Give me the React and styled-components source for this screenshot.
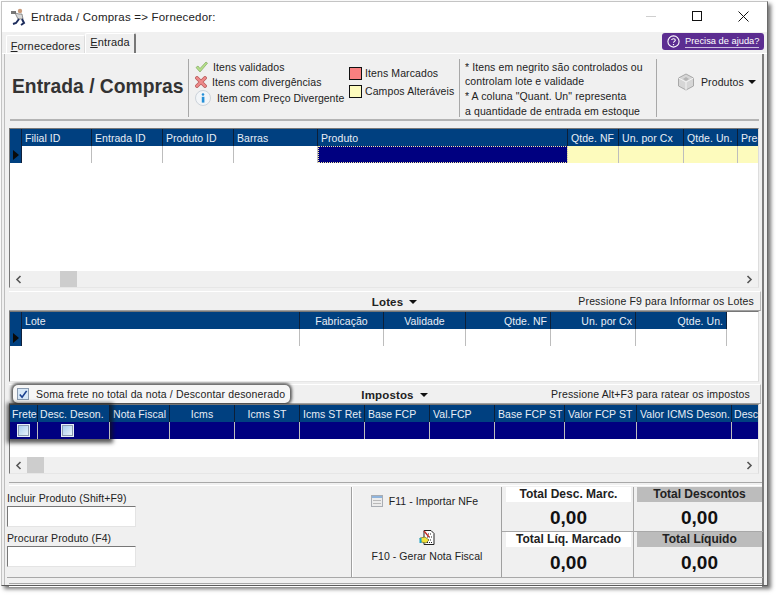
import React from 'react';
import styled, { createGlobalStyle } from 'styled-components';

const GlobalStyle = createGlobalStyle`
  html, body { margin: 0; padding: 0; background: #fff; }
  body { font-family: "Liberation Sans", Arial, sans-serif; font-size: 11px; color: #111; }
`;

const navy = '#004080';
const selected = '#000080';

const grid1Cols = [
  { label: 'Filial ID', w: 70 },
  { label: 'Entrada ID', w: 71 },
  { label: 'Produto ID', w: 71 },
  { label: 'Barras', w: 84 },
  { label: 'Produto', w: 250, focus: true },
  { label: 'Qtde. NF', w: 51, tint: true },
  { label: 'Un. por Cx', w: 65, tint: true },
  { label: 'Qtde. Un.', w: 54, tint: true },
  { label: 'Preço', w: 20, tint: true, last: true },
];

const grid2Cols = [
  { label: 'Lote', w: 278 },
  { label: 'Fabricação', w: 84, align: 'center' },
  { label: 'Validade', w: 82, align: 'center' },
  { label: 'Qtde. NF', w: 85, align: 'right' },
  { label: 'Un. por Cx', w: 85, align: 'right' },
  { label: 'Qtde. Un.', w: 91, align: 'right' },
];

const grid3Cols = [
  { label: 'Frete', w: 28, check: true, tight: true },
  { label: 'Desc. Deson.', w: 72, check: true, tight: true, offset: 13 },
  { label: 'Nota Fiscal', w: 60 },
  { label: 'Icms', w: 65, align: 'center' },
  { label: 'Icms ST', w: 65, align: 'center' },
  { label: 'Icms ST Ret', w: 65, align: 'center' },
  { label: 'Base FCP', w: 65 },
  { label: 'Val.FCP', w: 65 },
  { label: 'Base FCP ST', w: 70 },
  { label: 'Valor FCP ST', w: 72 },
  { label: 'Valor ICMS Deson.', w: 95 },
  { label: 'Desc.', w: 26, tight: true, last: true },
];

const Page = styled.div`
  width: 776px;
  height: 595px;
  padding: 1px 0 0 1px;
  box-sizing: border-box;
  overflow: hidden;
`;

const Win = styled.div`
  width: 767px;
  height: 585px;
  box-sizing: border-box;
  border: 1px solid #c4c4c4;
  border-right-color: #6a6a6a;
  border-bottom-color: #5a5a5a;
  box-shadow: 3px 3px 4px rgba(0, 0, 0, 0.55);
  background: #f0f0f0;
  display: flex;
  flex-direction: column;
`;

const TitleBar = styled.div`
  height: 30px;
  flex: none;
  background: #fff;
  display: flex;
  align-items: center;
  padding-left: 9px;
`;

const Title = styled.span`
  margin-left: 3px;
  font-size: 11.5px;
  letter-spacing: 0.2px;
  color: #222;
`;

const WinButtons = styled.div`
  margin-left: auto;
  display: flex;
  align-items: center;
  height: 100%;
  padding: 0 1px 2px 0;
  box-sizing: border-box;
`;

const WinButton = styled.div`
  width: 46px;
  height: 100%;
  display: flex;
  align-items: center;
  justify-content: center;
`;

const TabStrip = styled.div`
  height: 22px;
  flex: none;
  display: flex;
  align-items: flex-end;
  padding: 0 3px 0 4px;
  border-bottom: 1px solid #fff;
  box-sizing: border-box;
`;

const Tab = styled.div`
  height: ${(p) => (p.$active ? 20 : 18)}px;
  width: ${(p) => p.$w}px;
  box-sizing: border-box;
  display: flex;
  align-items: center;
  justify-content: center;
  font-size: 11px;
  letter-spacing: 0.15px;
  color: #222;
  border: 1px solid #fff;
  border-bottom: none;
  border-right: ${(p) => (p.$active ? '2px solid #777' : '1px solid #ddd')};
  border-radius: 2px 2px 0 0;
  padding: ${(p) => (p.$active ? '0 0 3px' : '2px 0 0')};
`;

const HelpButton = styled.div`
  margin-left: auto;
  width: 102px;
  height: 17px;
  margin-bottom: 3px;
  padding-left: 5px;
  box-sizing: border-box;
  background: #5c2d91;
  border-radius: 3px;
  display: flex;
  align-items: center;
  gap: 5px;
  color: #fff;
  font-size: 9.3px;
  & span { border-bottom: 1px solid #cdbfe0; line-height: 11px; }
`;

const Content = styled.div`
  flex: 1;
  min-height: 0;
  display: flex;
  flex-direction: column;
  margin-right: 3px;
  border-right: 2px solid #7c7c7c;
  border-left: 1px solid #bdbdbd;
  margin-left: 2px;
  padding: 0 0 0 4px;
`;

const Header = styled.div`
  height: 67px;
  flex: none;
  display: flex;
  align-items: stretch;
  padding-top: 5px;
  box-sizing: border-box;
  border-bottom: 2px solid #b4b4b4;
  margin: 0 3px 0 1px;
`;

const BigTitle = styled.div`
  width: 179px;
  margin-left: -1px;
  padding-left: 3px;
  box-sizing: border-box;
  display: flex;
  align-items: center;
  height: 56px;
  font-size: 19.3px;
  font-weight: 700;
  color: #333;
  white-space: nowrap;
`;

const HeaderBlock = styled.div`
  width: ${(p) => p.$w}px;
  flex: none;
  box-sizing: border-box;
  border-left: ${(p) => (p.$divider ? '1px solid #a8a8a8' : 'none')};
  height: 58px;
  display: flex;
  flex-direction: column;
  padding-top: ${(p) => p.$top || 0}px;
  padding-left: ${(p) => p.$pad || 0}px;
`;

const LegendRow = styled.div`
  display: flex;
  align-items: center;
  height: ${(p) => p.$h || 15}px;
  gap: ${(p) => p.$gap || 3}px;
  white-space: nowrap;
  font-size: 10.5px;
  letter-spacing: ${(p) => (p.$flat ? 0 : 0.1)}px;
  color: #222;
  & svg { flex: none; }
`;

const Swatch = styled.div`
  width: 11px;
  height: 11px;
  border: 1px solid #111;
  background: ${(p) => p.$color};
  flex: none;
`;

const NoteLine = styled.div`
  height: ${(p) => p.$h || 14}px;
  line-height: ${(p) => p.$h || 14}px;
  font-size: 10.5px;
  letter-spacing: 0.1px;
  white-space: nowrap;
  color: #222;
`;

const ProdutosMenu = styled.div`
  display: flex;
  align-items: center;
  gap: 6px;
  height: 100%;
  padding: 0 0 12px 20px;
  box-sizing: border-box;
  font-size: 10.5px;
  letter-spacing: 0.1px;
  color: #222;
`;

const Caret = styled.span`
  display: inline-block;
  width: 0;
  height: 0;
  border-left: 4px solid transparent;
  border-right: 4px solid transparent;
  border-top: 4px solid #111;
  margin-left: ${(p) => p.$gap || 0}px;
`;

const GridBox = styled.div`
  position: relative;
  height: ${(p) => p.$h}px;
  flex: none;
  box-sizing: border-box;
  background: #fff;
  margin: ${(p) => p.$mt || 0}px 2px 0 0;
  width: 750px;
  border-top: 1px solid #777;
  border-left: 1px solid #777;
  border-right: 1px solid #ddd;
  border-bottom: 1px solid #e6e6e6;
  display: flex;
  flex-direction: column;
`;

const HeadRow = styled.div`
  display: flex;
  height: 17px;
  flex: none;
  overflow: hidden;
`;

const BodyRow = styled.div`
  display: flex;
  height: 17px;
  flex: none;
  overflow: hidden;
`;

const Indicator = styled.div`
  width: 12px;
  flex: none;
  background: ${navy};
  border-right: 1px solid #10203a;
  box-sizing: border-box;
  display: flex;
  align-items: center;
  padding-left: 3px;
`;

const Arrow = styled.span`
  width: 0;
  height: 0;
  border-top: 5px solid transparent;
  border-bottom: 5px solid transparent;
  border-left: 6px solid #0a0a0a;
`;

const HeadCell = styled.div`
  width: ${(p) => p.$w}px;
  flex: none;
  box-sizing: border-box;
  background: ${navy};
  color: #e8eef6;
  font-size: 10.5px;
  line-height: 18px;
  letter-spacing: 0.05px;
  white-space: nowrap;
  overflow: hidden;
  text-align: ${(p) => p.$align || 'left'};
  padding: 0 3px 0 ${(p) => (p.$tight ? 2 : 3)}px;
  border-right: ${(p) => (p.$last ? 'none' : '1px solid #0c1f38')};
`;

const BodyCell = styled.div`
  width: ${(p) => p.$w}px;
  flex: none;
  box-sizing: border-box;
  background: ${(p) => p.$bg || '#fff'};
  border-right: ${(p) => (p.$last ? 'none' : '1px solid #bdbdbd')};
  ${(p) => p.$focus && 'outline: 1px dotted #f4e9a0; outline-offset: -1px;'}
  display: flex;
  align-items: center;
  justify-content: center;
  padding-right: ${(p) => p.$offset || 0}px;
`;

const Spacer = styled.div`
  flex: 1;
`;

const ScrollBar = styled.div`
  height: 16px;
  flex: none;
  background: #f0f0f0;
  display: flex;
  align-items: center;
  justify-content: space-between;
  padding: 0 5px 0 5px;
  position: relative;
`;

const ScrollThumb = styled.div`
  position: absolute;
  top: 0;
  left: ${(p) => p.$left}px;
  width: 17px;
  height: 16px;
  background: #cdcdcd;
`;

const SectionBar = styled.div`
  height: 20px;
  flex: none;
  width: 752px;
  margin-top: ${(p) => p.$mt || 0}px;
  box-sizing: border-box;
  background: #f0f0f0;
  border-top: 1px solid #fff;
  border-bottom: 1px solid #a0a0a0;
  border-right: 1px solid #bbb;
  display: grid;
  grid-template-columns: 1fr auto 1fr;
  align-items: center;
  font-size: 10.5px;
  letter-spacing: 0.15px;
  color: #222;
`;

const SectionTitle = styled.div`
  display: flex;
  align-items: center;
  gap: 6px;
  font-weight: 700;
  font-size: 11.5px;
  padding: 2px 0 0 20px;
`;

const SectionHint = styled.div`
  justify-self: end;
  padding: 0 ${(p) => p.$right || 6}px 1px 0;
`;

const Callout = styled.div`
  justify-self: start;
  display: flex;
  align-items: center;
  gap: 7px;
  width: 277px;
  height: 18px;
  box-sizing: border-box;
  margin-left: 4px;
  padding-left: 4px;
  background: #f6f6f6;
  border-radius: 5px;
  box-shadow: 0 0 3px 2px rgba(40, 40, 40, 0.75);
  white-space: nowrap;
`;

const CheckBox = styled.div`
  width: ${(p) => (p.$light ? 11 : 12)}px;
  height: ${(p) => (p.$light ? 11 : 12)}px;
  flex: none;
  box-sizing: border-box;
  border: 1px solid #8a9bb0;
  background: ${(p) => (p.$light ? 'linear-gradient(135deg, #a8cdee, #e8f2fb)' : '#d8e8f8')};
  outline: ${(p) => (p.$light ? '1px solid #e6eef7' : 'none')};
  display: flex;
  align-items: center;
  justify-content: center;
`;

const FreteHighlight = styled.div`
  position: absolute;
  left: 0;
  top: 0;
  width: 100px;
  height: 34px;
  box-shadow: 0 1px 4px 3px rgba(20, 20, 20, 0.7);
  pointer-events: none;
`;

const DoubleRule = styled.div`
  height: 2px;
  flex: none;
  margin: ${(p) => p.$mt || 0}px 0 0 0;
  border-top: 1px solid #a8a8a8;
  border-bottom: 1px solid #fff;
`;

const Footer = styled.div`
  flex: none;
  height: 90px;
  display: flex;
  margin-top: 1px;
  border-bottom: 1px solid #a8a8a8;
  margin-right: -1px;
  margin-left: -2px;
`;

const SearchPane = styled.div`
  width: 345px;
  flex: none;
  box-sizing: border-box;
  padding: 4px 0 0 0;
  border-right: 1px solid #a0a0a0;
`;

const FieldLabel = styled.div`
  height: 14px;
  line-height: 14px;
  font-size: 10.5px;
  letter-spacing: 0.1px;
  color: #222;
`;

const TextBox = styled.div`
  width: 129px;
  height: 21px;
  box-sizing: border-box;
  margin: 1px 0 4px 0;
  background: #fff;
  border-top: 1px solid #777;
  border-left: 1px solid #777;
  border-right: 1px solid #e4e4e4;
  border-bottom: 1px solid #e4e4e4;
`;

const ActionPane = styled.div`
  width: 150px;
  flex: none;
  box-sizing: border-box;
  border-left: 1px solid #fff;
  border-right: 1px solid #a0a0a0;
  display: flex;
  flex-direction: column;
  align-items: center;
  font-size: 10.5px;
  letter-spacing: 0.05px;
  color: #222;
  padding-top: 6px;
`;

const ActionRow = styled.div`
  display: flex;
  align-items: center;
  gap: 6px;
  height: 16px;
  padding-right: 5px;
`;

const GenerateIcon = styled.div`
  margin-top: 20px;
  height: 17px;
`;

const GenerateLabel = styled.div`
  margin-top: 4px;
`;

const Totals = styled.div`
  flex: 1;
  display: grid;
  grid-template-columns: 132px 1fr;
  grid-template-rows: 45px 1fr;
`;

const TotalCell = styled.div`
  box-sizing: border-box;
  padding: 0 ${(p) => (p.$right ? 1 : 2)}px 0 ${(p) => (p.$right ? 3 : 4)}px;
  border-right: ${(p) => (p.$right ? 'none' : '1px solid #a8a8a8')};
  border-bottom: ${(p) => (p.$bottom ? 'none' : '1px solid #a8a8a8')};
  display: flex;
  flex-direction: column;
  align-items: stretch;
`;

const TotalLabel = styled.div`
  height: 15px;
  line-height: 15px;
  flex: none;
  text-align: center;
  font-size: 12px;
  font-weight: 700;
  color: #222;
  background: ${(p) => (p.$gray ? '#bcbcbc' : '#fff')};
`;

const TotalValue = styled.div`
  text-align: center;
  font-size: 19px;
  font-weight: 700;
  color: #111;
  line-height: 26px;
  margin-top: 3px;
`;

const Check = ({ color = '#1a3f8f' }) => (
  <svg width="11" height="11" viewBox="0 0 11 11">
    <path d="M2 5.5 L4.5 8.5 L9.5 1.5" fill="none" stroke={color} strokeWidth="1.8" />
  </svg>
);

const PersonIcon = () => (
  <svg width="17" height="18" viewBox="0 0 17 18">
    <rect x="0" y="3" width="5" height="3" fill="#777" />
    <circle cx="9" cy="3" r="2.2" fill="#c99a7a" />
    <path d="M4 5 L8 6 L11 6 L12 11 L7 11 Z" fill="#d8d8d8" stroke="#555" strokeWidth="0.6" />
    <path d="M8 11 L5 15 L2 16 M11 11 L13 15 L10 17" fill="none" stroke="#1c2c5c" strokeWidth="2" />
  </svg>
);

const ValidIcon = () => (
  <svg width="13" height="12" viewBox="0 0 13 12">
    <path d="M1 6.5 L3 5 L5 7.5 L11 1 L12.5 2.2 L5 11 Z" fill="#b6e08a" stroke="#7fa860" strokeWidth="0.7" />
  </svg>
);

const ErrorIcon = () => (
  <svg width="12" height="12" viewBox="0 0 12 12">
    <path d="M2 2 L10 10 M10 2 L2 10" stroke="#b85c5c" strokeWidth="3.8" strokeLinecap="round" />
    <path d="M2 2 L10 10 M10 2 L2 10" stroke="#ee8a8a" strokeWidth="2.4" strokeLinecap="round" />
  </svg>
);

const InfoIcon = () => (
  <svg width="16" height="16" viewBox="0 0 16 16">
    <circle cx="8" cy="8" r="7.5" fill="#f2f5f8" stroke="#ccd3da" />
    <circle cx="8" cy="4.5" r="1.3" fill="#2590d8" />
    <rect x="6.8" y="6.8" width="2.6" height="5.8" fill="#2590d8" />
  </svg>
);

const CubeIcon = () => (
  <svg width="18" height="18" viewBox="0 0 18 18">
    <path d="M9 1 L16.5 5 L16.5 13 L9 17 L1.5 13 L1.5 5 Z" fill="#d6d6d6" stroke="#a8a8a8" />
    <path d="M1.5 5 L9 9 L16.5 5 M9 9 L9 17" fill="none" stroke="#f4f4f4" />
    <path d="M9 4 L12 6 L9 8 L6 6 Z" fill="#b5b5b5" />
  </svg>
);

const ListIcon = () => (
  <svg width="12" height="12" viewBox="0 0 12 12">
    <rect x="0.5" y="0.5" width="11" height="11" fill="#ececec" stroke="#a9adb3" />
    <rect x="1" y="1" width="10" height="2" fill="#8fb4dc" />
    <path d="M2 5.5 H10 M2 8.5 H10" stroke="#b9b9b9" />
  </svg>
);

const NoteIcon = () => (
  <svg width="16" height="17" viewBox="0 0 16 17">
    <path d="M5 1.5 H12 L15 4.5 V15.5 H5 Z" fill="#fff" stroke="#222" />
    <path d="M7 5 H12 M8 8 H13 M9 11 H13 M8 13.5 H13" stroke="#222" strokeDasharray="1 1" />
    <path d="M1 9 L6 8 L10 11 L7 14 L2 13 Z" fill="#f2e23c" stroke="#6a6a20" strokeWidth="0.7" />
    <rect x="0.5" y="9" width="2" height="5" fill="#1aa3c8" />
    <path d="M5 2 L10 8" stroke="#c8322a" strokeWidth="1.4" />
  </svg>
);

const HelpIcon = () => (
  <svg width="13" height="13" viewBox="0 0 13 13">
    <circle cx="6.5" cy="6.5" r="5.6" fill="none" stroke="#fff" strokeWidth="1.1" />
    <path d="M4.7 5 C4.7 3.4 8.3 3.4 8.3 5.2 C8.3 6.4 6.5 6.4 6.5 7.8" fill="none" stroke="#fff" strokeWidth="1.1" />
    <rect x="5.9" y="9" width="1.2" height="1.2" fill="#fff" />
  </svg>
);

const Chevron = ({ dir }) => (
  <svg width="7" height="9" viewBox="0 0 7 9">
    <path d={dir === 'left' ? 'M5.5 1 L2 4.5 L5.5 8' : 'M1.5 1 L5 4.5 L1.5 8'} fill="none" stroke="#555" strokeWidth="1.6" />
  </svg>
);

const Grid = ({ cols, h, mt, thumb, bodyBg, indicator = true, highlight }) => (
  <GridBox $h={h} $mt={mt}>
    <HeadRow>
      {indicator && <Indicator />}
      {cols.map((c) => (
        <HeadCell key={c.label} $w={c.w} $align={c.align} $tight={c.tight} $last={c.last}>{c.label}</HeadCell>
      ))}
    </HeadRow>
    <BodyRow>
      {indicator && <Indicator><Arrow /></Indicator>}
      {cols.map((c) => (
        <BodyCell
          key={c.label}
          $w={c.w}
          $last={c.last}
          $focus={c.focus}
          $offset={c.offset}
          $bg={bodyBg || (c.focus ? selected : c.tint ? '#fdfbbd' : '#fff')}
        >
          {c.check && <CheckBox $light />}
        </BodyCell>
      ))}
    </BodyRow>
    <Spacer />
    {thumb !== undefined && (
      <ScrollBar>
        <Chevron dir="left" />
        <ScrollThumb $left={thumb} />
        <Chevron dir="right" />
      </ScrollBar>
    )}
    {highlight && <FreteHighlight />}
  </GridBox>
);

export default function App() {
  return (
    <Page>
      <GlobalStyle />
      <Win>
        <TitleBar>
          <PersonIcon />
          <Title>Entrada / Compras =&gt; Fornecedor:</Title>
          <WinButtons>
            <WinButton>
              <svg width="10" height="10" viewBox="0 0 10 10"><path d="M0 5.5 H10" stroke="#cfcfcf" /></svg>
            </WinButton>
            <WinButton>
              <svg width="10" height="10" viewBox="0 0 10 10"><rect x="0.5" y="0.5" width="9" height="9" fill="none" stroke="#111" /></svg>
            </WinButton>
            <WinButton>
              <svg width="11" height="11" viewBox="0 0 11 11"><path d="M0.5 0.5 L10.5 10.5 M10.5 0.5 L0.5 10.5" stroke="#111" /></svg>
            </WinButton>
          </WinButtons>
        </TitleBar>
        <TabStrip>
          <Tab $w={79}><span><u>F</u>ornecedores</span></Tab>
          <Tab $w={51} $active><span><u>E</u>ntrada</span></Tab>
          <HelpButton>
            <HelpIcon />
            <span>Precisa de ajuda?</span>
          </HelpButton>
        </TabStrip>
        <Content>
          <Header>
            <BigTitle>Entrada / Compras</BigTitle>
            <HeaderBlock $w={154} $divider $pad={6}>
              <LegendRow $gap={5}><ValidIcon />Itens validados</LegendRow>
              <LegendRow $gap={5}><ErrorIcon />Itens com divergências</LegendRow>
              <LegendRow $h={17} $gap={6} $flat><InfoIcon />Item com Preço Divergente</LegendRow>
            </HeaderBlock>
            <HeaderBlock $w={117} $top={5} $pad={7}>
              <LegendRow $h={18}><Swatch $color="#f98080" />Itens Marcados</LegendRow>
              <LegendRow $h={18}><Swatch $color="#fdfbbd" />Campos Alteráveis</LegendRow>
            </HeaderBlock>
            <HeaderBlock $w={197} $divider $pad={5} $top={1}>
              <NoteLine>* Itens em negrito são controlados ou</NoteLine>
              <NoteLine>controlam lote e validade</NoteLine>
              <NoteLine $h={16}>* A coluna "Quant. Un" representa</NoteLine>
              <NoteLine>a quantidade de entrada em estoque</NoteLine>
            </HeaderBlock>
            <HeaderBlock $w={100} $divider>
              <ProdutosMenu><CubeIcon />Produtos<Caret $gap={-2} /></ProdutosMenu>
            </HeaderBlock>
          </Header>
          <Grid cols={grid1Cols} h={160} mt={7} thumb={50} />
          <SectionBar $mt={3}>
            <span />
            <SectionTitle>Lotes <Caret /></SectionTitle>
            <SectionHint>Pressione F9 para Informar os Lotes</SectionHint>
          </SectionBar>
          <Grid cols={grid2Cols} h={71} mt={0} />
          <SectionBar $mt={2}>
            <Callout>
              <CheckBox><Check /></CheckBox>
              Soma frete no total da nota / Descontar desonerado
            </Callout>
            <SectionTitle>Impostos <Caret /></SectionTitle>
            <SectionHint $right={10}>Pressione Alt+F3 para ratear os impostos</SectionHint>
          </SectionBar>
          <Grid cols={grid3Cols} h={70} mt={0} thumb={17} bodyBg={selected} indicator={false} highlight />
          <DoubleRule $mt={8} />
          <Footer>
            <SearchPane>
              <FieldLabel>Incluir Produto (Shift+F9)</FieldLabel>
              <TextBox />
              <FieldLabel>Procurar Produto (F4)</FieldLabel>
              <TextBox />
            </SearchPane>
            <ActionPane>
              <ActionRow><ListIcon />F11 - Importar NFe</ActionRow>
              <GenerateIcon><NoteIcon /></GenerateIcon>
              <GenerateLabel>F10 - Gerar Nota Fiscal</GenerateLabel>
            </ActionPane>
            <Totals>
              <TotalCell>
                <TotalLabel>Total Desc. Marc.</TotalLabel>
                <TotalValue>0,00</TotalValue>
              </TotalCell>
              <TotalCell $right>
                <TotalLabel $gray>Total Descontos</TotalLabel>
                <TotalValue>0,00</TotalValue>
              </TotalCell>
              <TotalCell $bottom>
                <TotalLabel>Total Líq. Marcado</TotalLabel>
                <TotalValue>0,00</TotalValue>
              </TotalCell>
              <TotalCell $right $bottom>
                <TotalLabel $gray>Total Líquido</TotalLabel>
                <TotalValue>0,00</TotalValue>
              </TotalCell>
            </Totals>
          </Footer>
          <DoubleRule $mt={5} />
        </Content>
      </Win>
    </Page>
  );
}
